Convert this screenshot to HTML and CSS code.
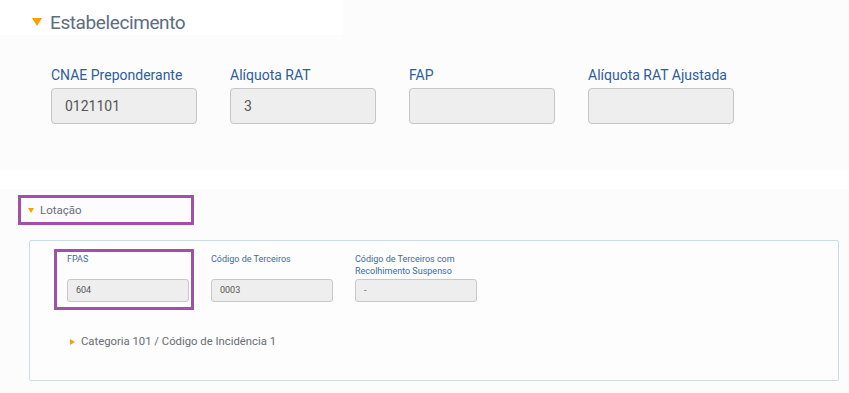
FILE: index.html
```html
<!DOCTYPE html>
<html>
    <head>
        <title>Estabelecimento</title>
        <meta charset="UTF-8" />
        <meta name="viewport" content="width=device-width, initial-scale=1.0" />
        <link rel="stylesheet" href="styles.css">
    </head>
    <body>
        <div class="top">
            <div class="top-head">
                <span class="caret-down"></span>
                <h1>Estabelecimento</h1>
            </div>
            <div class="fields">
                <div class="field">
                    <div class="label">CNAE Preponderante</div>
                    <div class="input">0121101</div>
                </div>
                <div class="field">
                    <div class="label">Alíquota RAT</div>
                    <div class="input">3</div>
                </div>
                <div class="field">
                    <div class="label">FAP</div>
                    <div class="input"></div>
                </div>
                <div class="field">
                    <div class="label">Alíquota RAT Ajustada</div>
                    <div class="input"></div>
                </div>
            </div>
        </div>

        <div class="divider"></div>

        <div class="bottom">
            <div class="lot-toggle">
                <span class="caret-sm"></span>Lotação
            </div>
            <div class="panel">
                <div class="sub-fields">
                    <div class="sfield marked">
                        <div class="slabel">FPAS</div>
                        <div class="sinput">604</div>
                    </div>
                    <div class="sfield">
                        <div class="slabel">Código de Terceiros</div>
                        <div class="sinput">0003</div>
                    </div>
                    <div class="sfield">
                        <div class="slabel">Código de Terceiros com Recolhimento Suspenso</div>
                        <div class="sinput">-</div>
                    </div>
                </div>
                <div class="cat">
                    <span class="caret-right"></span>Categoria 101 / Código de Incidência 1
                </div>
            </div>
        </div>
    </body>
</html>
```

FILE: styles.css
```css
body {
    margin: 0;
    background: #fcfcfc;
    font-family: Roboto, "Liberation Sans", sans-serif;
}

/* upper part */
.top {
    height: 170px;
    background: #fcfcfc;
}
.top-head {
    width: 343px;
    height: 35px;
    background: #ffffff;
    display: flex;
    align-items: flex-start;
}
.caret-down {
    width: 0;
    height: 0;
    margin: 18px 8px 0 32px;
    border-left: 5px solid transparent;
    border-right: 5px solid transparent;
    border-top: 8px solid #f5a100;
}
.top-head h1 {
    margin: 11px 0 0 0;
    font-size: 19px;
    line-height: 24px;
    letter-spacing: -0.4px;
    font-weight: normal;
    color: #5d6c7f;
}
.fields {
    display: flex;
    gap: 33px;
    margin-top: 31px;
    padding-left: 51px;
}
.field {
    width: 146px;
}
.label {
    font-size: 14px;
    line-height: 18px;
    color: #2f5d9b;
    margin-bottom: 4px;
    white-space: nowrap;
}
.input {
    box-sizing: border-box;
    height: 36px;
    padding-left: 13px;
    border: 1px solid #c5c5c5;
    border-radius: 4px;
    background: #eeeeee;
    font-size: 14px;
    line-height: 34px;
    color: #555555;
}

.divider {
    height: 19px;
    background: #ffffff;
}

/* lower part */
.bottom {
    padding-top: 6px;
    height: 198px;
    box-sizing: border-box;
}
.lot-toggle {
    box-sizing: border-box;
    width: 176px;
    height: 30px;
    margin-left: 18px;
    border: 3px solid #a24fa8;
    display: flex;
    align-items: center;
    padding-left: 7px;
    font-size: 11.5px;
    color: #666e78;
}
.caret-sm {
    width: 0;
    height: 0;
    margin-right: 6px;
    border-left: 3px solid transparent;
    border-right: 3px solid transparent;
    border-top: 5px solid #f5a100;
}
.panel {
    margin: 15px 10px 0 29px;
    padding: 12px 0 30px 0;
    border: 1px solid #c9dde2;
    border-radius: 2px;
    background: #fdfdfd;
}
.sub-fields {
    display: flex;
    gap: 22px;
    padding-left: 37px;
}
.sfield {
    width: 122px;
    position: relative;
}
.sfield.marked::after {
    content: "";
    position: absolute;
    left: -13px;
    top: -4px;
    right: -5px;
    bottom: -8px;
    border: 3px solid #a24fa8;
}
.slabel {
    height: 24px;
    margin-bottom: 2px;
    font-size: 9px;
    line-height: 12px;
    color: #3c6aa3;
}
.sinput {
    box-sizing: border-box;
    height: 23px;
    padding-left: 8px;
    border: 1px solid #c8c8c8;
    border-radius: 3px;
    background: #eeeeee;
    font-size: 9px;
    line-height: 21px;
    color: #555555;
}
.cat {
    margin-top: 32px;
    padding-left: 40px;
    display: flex;
    align-items: center;
    font-size: 11.3px;
    line-height: 16px;
    color: #666c74;
}
.caret-right {
    width: 0;
    height: 0;
    margin-right: 6px;
    border-top: 3px solid transparent;
    border-bottom: 3px solid transparent;
    border-left: 5px solid #f5a100;
}
```
